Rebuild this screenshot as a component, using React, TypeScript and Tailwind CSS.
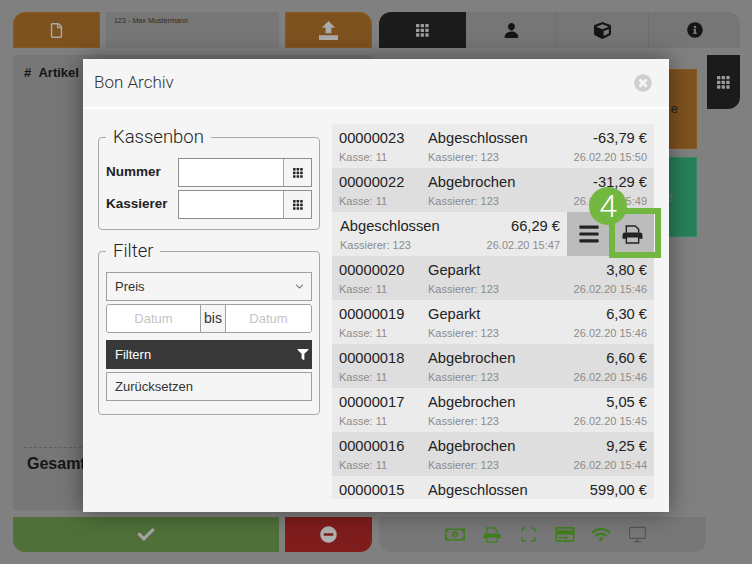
import { FaBars, FaCheck, FaCube, FaFilter, FaInfoCircle, FaMinusCircle, FaRegCreditCard, FaRegFile, FaRegMoneyBillAlt, FaTimesCircle, FaWifi } from "react-icons/fa";
import { IoPerson, IoChevronDown } from "react-icons/io5";
import { Monitor } from "lucide-react";

function Dots({ className = "" }: { className?: string }) {
  const cells = [0, 1, 2];
  return (
    <svg viewBox="0 0 14 14" className={className} fill="currentColor">
      {cells.map((y) =>
        cells.map((x) => <rect key={`${x}-${y}`} x={x * 5} y={y * 5} width="3.6" height="3.6" rx="0.6" />)
      )}
    </svg>
  );
}

function PrinterIcon({ className = "" }: { className?: string }) {
  return (
    <svg viewBox="0 0 22 20" className={className}>
      <path d="M4.500 8V1h9.500l3.500 3.500V8" fill="none" stroke="currentColor" strokeWidth="1.500" />
      <path d="M3 8h16a2.500 2.500 0 0 1 2.500 2.500V14.500H17.500V12.500H4.500V14.500H.5V10.500A2.500 2.500 0 0 1 3 8z" fill="currentColor" />
      <path d="M4.500 12.500h13V19h-13z" fill="none" stroke="currentColor" strokeWidth="1.500" />
    </svg>
  );
}

function UploadIcon({ className = "" }: { className?: string }) {
  return (
    <svg viewBox="0 0 20 20" className={className} fill="currentColor">
      <path d="M10 0l7 7h-4v6H7V7H3z" />
      <path d="M0 15h20v5H0z" />
    </svg>
  );
}

function ScanIcon({ className = "" }: { className?: string }) {
  return (
    <svg viewBox="0 0 16 16" className={className} fill="none" stroke="currentColor" strokeWidth="1.500">
      <path d="M1 5V2.500A1.500 1.500 0 0 1 2.500 1H5M11 1h2.500A1.500 1.500 0 0 1 15 2.500V5M15 11v2.500a1.500 1.500 0 0 1-1.500 1.500H11M5 15H2.500A1.500 1.500 0 0 1 1 13.500V11" />
    </svg>
  );
}

type Bon = { nr: string; status: string; price: string; date: string };

const bons: Bon[] = [
  { nr: "00000023", status: "Abgeschlossen", price: "-63,79 €", date: "26.02.20 15:50" },
  { nr: "00000022", status: "Abgebrochen", price: "-31,29 €", date: "26.02.20 15:49" },
  { nr: "00000021", status: "Abgeschlossen", price: "66,29 €", date: "26.02.20 15:47" },
  { nr: "00000020", status: "Geparkt", price: "3,80 €", date: "26.02.20 15:46" },
  { nr: "00000019", status: "Geparkt", price: "6,30 €", date: "26.02.20 15:46" },
  { nr: "00000018", status: "Abgebrochen", price: "6,60 €", date: "26.02.20 15:46" },
  { nr: "00000017", status: "Abgebrochen", price: "5,05 €", date: "26.02.20 15:45" },
  { nr: "00000016", status: "Abgebrochen", price: "9,25 €", date: "26.02.20 15:44" },
  { nr: "00000015", status: "Abgeschlossen", price: "599,00 €", date: "26.02.20 15:44" },
];

function BonRow({ bon, index }: { bon: Bon; index: number }) {
  const bg = index % 2 === 0 ? "bg-[#ebebeb]" : "bg-[#dedede]";
  if (bon.nr === "00000021") {
    return (
      <div className="flex h-11 shrink-0 bg-[#ebebeb]">
        <div className="flex-1 pl-2 pr-[7px] pt-[5px]">
          <div className="flex justify-between text-[14.7px] leading-[18px] text-[#222]">
            <span>{bon.status}</span>
            <span>{bon.price}</span>
          </div>
          <div className="mt-[4px] flex justify-between text-[11px] leading-[13px] text-[#8c8c8c]">
            <span>Kassierer: 123</span>
            <span>{bon.date}</span>
          </div>
        </div>
        <div className="flex w-[87px] bg-[#bcbcbc] text-[#222]">
          <div className="flex w-[43px] items-center justify-center">
            <FaBars className="h-[22px] w-[20px]" />
          </div>
          <div className="flex w-[44px] items-center justify-center">
            <PrinterIcon className="h-[19px] w-[21px]" />
          </div>
        </div>
      </div>
    );
  }
  return (
    <div className={`flex h-11 shrink-0 pl-[7px] pr-[7px] pt-[5px] ${bg}`}>
      <div className="w-[89px] text-[14.7px] leading-[18px] text-[#222]">
        {bon.nr}
        <div className="mt-[4px] text-[11px] leading-[13px] text-[#8c8c8c]">Kasse: 11</div>
      </div>
      <div className="flex-1 text-[14.7px] leading-[18px] text-[#222]">
        {bon.status}
        <div className="mt-[4px] text-[11px] leading-[13px] text-[#8c8c8c]">Kassierer: 123</div>
      </div>
      <div className="text-right text-[14.7px] leading-[18px] text-[#222]">
        {bon.price}
        <div className="mt-[4px] text-[11px] leading-[13px] text-[#8c8c8c]">{bon.date}</div>
      </div>
    </div>
  );
}

function NumberField({ label }: { label: string }) {
  return (
    <div className="flex h-[29px] items-center">
      <span className="w-[72px] text-[13.5px] font-bold text-[#222]">{label}</span>
      <div className="flex h-full w-[134px] border border-[#8f8f8f] bg-white">
        <div className="flex-1" />
        <div className="flex w-[28px] items-center justify-center border-l border-[#a5a5a5] bg-[#f5f5f5] text-[#222]">
          <Dots className="h-[10px] w-[10px]" />
        </div>
      </div>
    </div>
  );
}

function Modal() {
  return (
    <div className="absolute left-[83px] top-[59px] flex h-[453px] w-[586px] flex-col bg-[#f5f5f5] shadow-[0_0_22px_rgba(0,0,0,0.45)]">
      <div className="flex h-[50px] shrink-0 items-center justify-between border-b-2 border-white pl-[11px] pr-[17px]">
        <span className="font-['Roboto',sans-serif] text-[17px] font-light text-[#333]">Bon Archiv</span>
        <FaTimesCircle className="h-[18px] w-[18px] text-[#cfcfcf]" />
      </div>
      <div className="flex flex-1 items-start overflow-hidden pl-[15px] pr-[15px] pt-[15px]">
        <div className="flex w-[222px] shrink-0 flex-col gap-[11px] pt-[3px]">
          <fieldset className="h-[103px] rounded-[4px] border border-[#a8a8a8] px-[7px] pb-[11px]">
            <legend className="px-[7px] font-['Roboto',sans-serif] text-[18.5px] font-light leading-[20px] text-[#222]">Kassenbon</legend>
            <div className="mt-[11px] flex flex-col gap-[3px]">
              <NumberField label="Nummer" />
              <NumberField label="Kassierer" />
            </div>
          </fieldset>
          <fieldset className="h-[174px] rounded-[4px] border border-[#a8a8a8] px-[7px]">
            <legend className="px-[7px] font-['Roboto',sans-serif] text-[18.5px] font-light leading-[20px] text-[#222]">Filter</legend>
            <div className="mt-[11px] flex flex-col text-[13px] text-[#333]">
              <div className="flex h-[29px] items-center justify-between border border-[#a0a0a0] pl-[8px] pr-[6px]">
                Preis
                <IoChevronDown className="h-[11px] w-[11px] text-[#777]" />
              </div>
              <div className="mt-[3px] flex h-[29px] overflow-hidden rounded-[3px] border border-[#a0a0a0] text-center">
                <div className="w-[93px] bg-white leading-[27px] text-[#c4c4c4]">Datum</div>
                <div className="w-[26px] border-x border-[#a0a0a0] text-[14px] leading-[27px] text-[#333]">bis</div>
                <div className="flex-1 bg-white leading-[27px] text-[#c4c4c4]">Datum</div>
              </div>
              <div className="mt-[7px] flex h-[29px] items-center justify-between bg-[#383838] pl-[9px] pr-[3px] text-white">
                Filtern
                <FaFilter className="h-[11px] w-[12px]" />
              </div>
              <div className="mt-[3px] flex h-[29px] items-center border border-[#a0a0a0] pl-[8px]">Zurücksetzen</div>
            </div>
          </fieldset>
        </div>
        <div className="ml-[12px] flex h-[375px] w-[322px] shrink-0 flex-col overflow-hidden">
          {bons.map((bon, i) => (
            <BonRow key={bon.nr} bon={bon} index={i} />
          ))}
        </div>
      </div>
      <div className="absolute left-[526px] top-[149px] h-[50px] w-[52px] border-[6px] border-[#72b73f]" />
      <div className="absolute left-[506px] top-[128px] flex h-[38px] w-[38px] items-center justify-center rounded-full bg-[#72b73f] font-['Roboto',sans-serif] text-[32px] font-light leading-none text-white">
        4
      </div>
    </div>
  );
}

export default function App() {
  const iconCell = "flex w-[36.6px] justify-center";
  return (
    <div className="relative flex h-[564px] w-[752px] flex-col gap-[7px] overflow-hidden bg-[#808080] pb-[12px] pl-[13px] pr-[12px] pt-[12px] font-['Liberation_Sans',sans-serif]">
      <div className="flex h-[36px] shrink-0 gap-[7px]">
        <div className="flex w-[359px] gap-[6px]">
          <div className="flex w-[87px] items-center justify-center rounded-tl-[12px] border border-[#8a5a1c] bg-[#7e521f] text-[#a8a8a8]">
            <FaRegFile className="h-[15px] w-[13px]" />
          </div>
          <div className="flex-1 bg-[#777] pl-[8px] pt-[4px] text-[7.2px] text-[#2a2a2a]">123 - Max Mustermann</div>
          <div className="flex w-[87px] items-center justify-center rounded-tr-[12px] border border-[#8a5a1c] bg-[#7e521f] text-[#ababab]">
            <UploadIcon className="h-[19px] w-[19px]" />
          </div>
        </div>
        <div className="flex flex-1 overflow-hidden rounded-t-[12px] bg-[#767676] text-[#151515]">
          <div className="flex w-[87px] items-center justify-center bg-[#1b1b1b] text-[#9c9c9c]">
            <Dots className="h-[13px] w-[13px]" />
          </div>
          <div className="flex w-[91px] items-center justify-center border-r border-[#6f6f6f]">
            <IoPerson className="h-[17px] w-[17px]" />
          </div>
          <div className="flex w-[92px] items-center justify-center border-r border-[#6f6f6f]">
            <FaCube className="h-[17px] w-[17px]" />
          </div>
          <div className="flex flex-1 items-center justify-center">
            <FaInfoCircle className="h-[16px] w-[16px]" />
          </div>
        </div>
      </div>

      <div className="flex min-h-0 flex-1 gap-[7px]">
        <div className="w-[359px] bg-[#777] px-[11px] pt-[8px]">
          <div className="h-[384px] text-[13px] font-bold text-[#151515]">#&nbsp;&nbsp;Artikel</div>
          <div className="border-t border-dashed border-[#5f5f5f] px-[3px] pt-[4px] text-[16px] font-bold text-[#151515]">Gesamt</div>
        </div>
        <div className="flex flex-1 gap-[10px]">
          <div className="flex w-[318px] flex-col gap-[8px] pt-[14px]">
            <div className="flex h-[80px] items-center justify-end border border-[#8a5a1c] bg-[#7e521f] pr-[18px] text-[13px] text-[#222]">e</div>
            <div className="flex h-[80px] items-center justify-end border border-[#2f8a62] bg-[#27805a] pr-[23px] text-[13px] text-[#777]">e</div>
          </div>
          <div className="flex h-[54px] w-[33px] items-center justify-center rounded-br-[12px] bg-[#1b1b1b] text-[#9c9c9c]">
            <Dots className="h-[13px] w-[13px]" />
          </div>
        </div>
      </div>

      <div className="flex h-[35px] shrink-0 gap-[7px]">
        <div className="flex w-[359px] gap-[6px]">
          <div className="flex w-[266px] items-center justify-center rounded-bl-[12px] bg-[#4f7038] text-[#a3a3a3]">
            <FaCheck className="h-[17px] w-[20px]" />
          </div>
          <div className="flex flex-1 items-center justify-center rounded-br-[12px] bg-[#7e1d1c] text-[#b0b0b0]">
            <FaMinusCircle className="h-[17px] w-[17px]" />
          </div>
        </div>
        <div className="flex w-[327px] items-center justify-center rounded-b-[12px] bg-[#777] pl-[8px] text-[#3f7f1c]">
          <div className={iconCell}><FaRegMoneyBillAlt className="h-[19px] w-[20px]" /></div>
          <div className={iconCell}><PrinterIcon className="h-[16px] w-[18px]" /></div>
          <div className={iconCell}><ScanIcon className="h-[15px] w-[15px]" /></div>
          <div className={iconCell}><FaRegCreditCard className="h-[17px] w-[20px]" /></div>
          <div className={iconCell}><FaWifi className="h-[15px] w-[20px]" /></div>
          <div className={iconCell}><Monitor className="h-[19px] w-[21px] text-[#555]" strokeWidth={1.5} /></div>
        </div>
      </div>
      <Modal />
    </div>
  );
}
